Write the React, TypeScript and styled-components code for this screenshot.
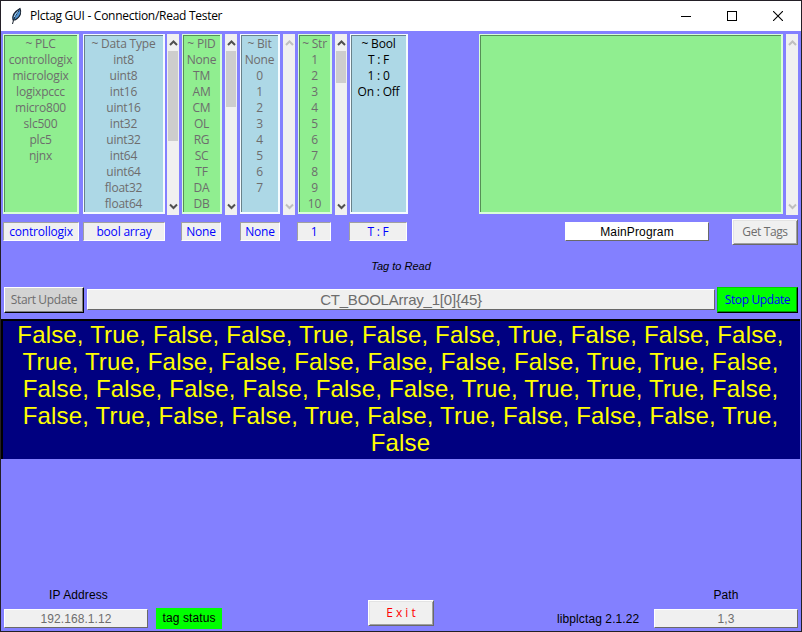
import React from "react";
import styled, { createGlobalStyle } from "styled-components";

const GlobalStyle = createGlobalStyle`
  * { box-sizing: border-box; }
  body { margin: 0; background: #8380ff; overflow: hidden; }
`;

const ui = `"Open Sans", "Noto Sans", sans-serif`;
const arial = `"Liberation Sans", Arial, sans-serif`;

const Window = styled.div`
  width: 802px;
  height: 632px;
  display: flex;
  flex-direction: column;
  border: 1px solid #231f26;
  background: #8380ff;
  font: 12px/16px ${ui};
  white-space: pre;
  cursor: default;
`;

const TitleBar = styled.header`
  height: 30px;
  flex: none;
  display: flex;
  align-items: center;
  background: #fff;
  color: #000;
  padding-left: 9px;
`;

const Title = styled.h1`
  margin: 0 auto 0 7px;
  font: 12px/16px ${ui};
  letter-spacing: -0.28px;
`;

const Caption = styled.span`
  width: 46px;
  height: 30px;
  display: flex;
  align-items: center;
  justify-content: center;
`;

const ListRow = styled.section`
  display: flex;
  height: 184px;
  padding: 3px 0 0 2px;
`;

const ListBox = styled.ul<{ $w: number; $tone: "green" | "blue"; $gap?: number; $active?: boolean }>`
  width: ${(p) => p.$w}px;
  height: 180px;
  flex: none;
  margin: 0 0 0 ${(p) => p.$gap ?? 3}px;
  padding: 1px 0 0;
  list-style: none;
  overflow: hidden;
  text-align: center;
  letter-spacing: -0.2px;
  color: ${(p) => (p.$active ? "#000" : "#6d6d6d")};
  background: ${(p) => (p.$tone === "green" ? "#90ee90" : "#add8e6")};
  border: solid;
  border-width: 1px 2px 2px 1px;
  border-color: ${(p) => (p.$tone === "green" ? "#d8ffd8" : "#f4fcff")};
  box-shadow: inset 1px 1px ${(p) => (p.$tone === "green" ? "#568f56" : "#68828a")};
`;

const Track = styled.div<{ $gap?: number }>`
  width: 12px;
  height: 181px;
  flex: none;
  margin-left: ${(p) => p.$gap ?? 3}px;
  display: flex;
  flex-direction: column;
  background: #f0f0f0;
`;

const Thumb = styled.div<{ $h: number }>`
  height: ${(p) => p.$h}px;
  margin: 0 1px;
  background: #cdcdcd;
`;

const Arrow = styled.svg<{ $last?: boolean }>`
  display: block;
  flex: none;
  width: 12px;
  height: 17px;
  margin-top: ${(p) => (p.$last ? "auto" : "0")};
`;

const Row = styled.section<{ $h: number; $mt?: number; $left?: number }>`
  display: flex;
  flex: none;
  height: ${(p) => p.$h}px;
  margin-top: ${(p) => p.$mt ?? 0}px;
  padding-left: ${(p) => p.$left ?? 2}px;
  align-items: center;
`;

const Value = styled.div<{ $w: number; $gap?: number }>`
  width: ${(p) => p.$w}px;
  height: 19px;
  margin: 0 0 1px ${(p) => p.$gap ?? 0}px;
  border: 1px solid;
  border-color: #a0a0a0 #fff #fff #a0a0a0;
  background: #f0f0f0;
  color: #0000ff;
  line-height: 18px;
  text-align: center;
  letter-spacing: -0.2px;
`;

const Entry = styled.div<{ $w: number; $gap?: number; $h?: number; $live?: boolean; $size?: number; $ls?: number }>`
  width: ${(p) => p.$w}px;
  height: ${(p) => p.$h ?? 19}px;
  margin: 0 0 1px ${(p) => p.$gap ?? 0}px;
  border: 1px solid;
  border-color: #fff #696969 #696969 #fff;
  background: ${(p) => (p.$live ? "#fff" : "#f0f0f0")};
  color: ${(p) => (p.$live ? "#000" : "#6d6d6d")};
  font: ${(p) => p.$size ?? 12}px/${(p) => (p.$h ?? 19) - 1}px ${arial};
  letter-spacing: ${(p) => p.$ls ?? 0.08}px;
  text-align: center;
`;

const Button = styled.button<{ $w: number; $gap?: number; $kind: "plain" | "grey" | "green" | "exit" }>`
  width: ${(p) => p.$w}px;
  height: 26px;
  flex: none;
  margin: 0 0 0 ${(p) => p.$gap ?? 0}px;
  padding: 0;
  border: 1px solid;
  font: 12px/22px ${ui};
  letter-spacing: ${(p) => (p.$kind === "exit" ? "0" : "-0.38px")};
  ${(p) =>
    ({
      plain: `background:#f0f0f0;color:#6d6d6d;border-color:#fff #696969 #696969 #fff;box-shadow:inset 1px 1px #e3e3e3,inset -1px -1px #a0a0a0;`,
      exit: `background:#f0f0f0;color:#f00;border-color:#fff #696969 #696969 #fff;box-shadow:inset 1px 1px #e3e3e3,inset -1px -1px #a0a0a0;`,
      grey: `background:#d3d3d3;color:#6d6d6d;border-color:#fff #000 #000 #fff;box-shadow:inset -1px -1px #7e7e7e;`,
      green: `background:#0f0;color:#00f;border-color:#00d000 #000 #000 #00d000;box-shadow:inset -1px -1px #009900;`,
    })[p.$kind]}
`;

const Hint = styled.div`
  height: 16px;
  margin-top: 13px;
  flex: none;
  text-align: center;
  font: italic 11px/16px ${arial};
  color: #000;
`;

const Results = styled.output`
  display: block;
  flex: none;
  height: 140px;
  margin: 6px 1px 0 0;
  padding-right: 2px;
  border: solid #000;
  border-width: 2px 0 0 2px;
  background: #000080;
  color: #ff0;
  font: 24px/27px ${arial};
  letter-spacing: 0.175px;
  text-align: center;
`;

const Footer = styled.footer`
  margin-top: auto;
  height: 46px;
  flex: none;
  display: flex;
  align-items: flex-start;
  padding-left: 3px;
  font-family: ${arial};
  letter-spacing: 0.1px;
  color: #000;
`;

const Field = styled.label`
  display: flex;
  flex-direction: column;
  align-items: center;
  gap: 6px;
  padding-top: 2px;
`;

const FieldName = styled.span<{ $shift?: number }>`
  padding-left: ${(p) => p.$shift ?? 0}px;
`;

const Status = styled.div`
  width: 66px;
  height: 21px;
  margin: 23px 0 0 8px;
  background: #0f0;
  text-align: center;
  line-height: 21px;
`;

const Slot = styled.div<{ $ml: number; $mt: number; $w: number }>`
  width: ${(p) => p.$w}px;
  margin: ${(p) => p.$mt}px 0 0 ${(p) => p.$ml}px;
`;

function Chevron({ down, dim }: { down?: boolean; dim?: boolean }) {
  return (
    <Arrow $last={down} viewBox="0 0 12 17">
      <path
        d={down ? "M3 6.5 6.5 10 10 6.5" : "M3 11 6.5 7.5 10 11"}
        fill="none"
        stroke={dim ? "#bfbfbf" : "#505050"}
        strokeWidth="2"
      />
    </Arrow>
  );
}

function Scroll({ thumb, gap }: { thumb?: number; gap?: number }) {
  return (
    <Track $gap={gap}>
      <Chevron dim={!thumb} />
      {thumb ? <Thumb $h={thumb} /> : null}
      <Chevron down dim={!thumb} />
    </Track>
  );
}

const items = (values: string) => values.split("|").map((v) => <li key={v}>{v}</li>);

const lines = [
  "False, True, False, False, True, False, False, True, False, False, False,",
  "True, True, False, False, False, False, False, False, True, True, False,",
  "False, False, False, False, False, False, True, True, True, True, False,",
  "False, True, False, False, True, False, True, False, False, False, True,",
  "False",
];

export default function App() {
  return (
    <Window>
      <GlobalStyle />
      <TitleBar>
        <svg width="13" height="18" viewBox="0 0 13 18">
          <path d="M3 13C2 9 4 5 10 1.5C11.5 5 11 10 5 13Z" fill="#4f91d0" stroke="#17202c" strokeWidth="1.1" />
          <path d="M2.5 17C3.5 12 6 7 9 3.5" fill="none" stroke="#17202c" strokeWidth="1" />
          <path d="M8 4.5C6 6 5 8 4.5 10" fill="none" stroke="#b7dcf7" strokeWidth="1" />
        </svg>
        <Title>Plctag GUI - Connection/Read Tester</Title>
        <Caption>
          <svg width="10" height="10"><path d="M0 5.5H10" stroke="#000" /></svg>
        </Caption>
        <Caption>
          <svg width="10" height="10"><rect x=".5" y=".5" width="9" height="9" fill="none" stroke="#000" /></svg>
        </Caption>
        <Caption>
          <svg width="10" height="10"><path d="M0 0 10 10M10 0 0 10" stroke="#000" strokeWidth="1.1" /></svg>
        </Caption>
      </TitleBar>

      <ListRow>
        <ListBox $w={76} $tone="green" $gap={0}>
          {items("~ PLC|controllogix|micrologix|logixpccc|micro800|slc500|plc5|njnx")}
        </ListBox>
        <ListBox $w={82} $tone="blue" $gap={4}>
          {items("~ Data Type|int8|uint8|int16|uint16|int32|uint32|int64|uint64|float32|float64")}
        </ListBox>
        <Scroll thumb={90} gap={2} />
        <ListBox $w={40} $tone="green">{items("~ PID|None|TM|AM|CM|OL|RG|SC|TF|DA|DB")}</ListBox>
        <Scroll thumb={56} />
        <ListBox $w={40} $tone="blue">{items("~ Bit|None|0|1|2|3|4|5|6|7")}</ListBox>
        <Scroll />
        <ListBox $w={34} $tone="green">{items("~ Str|1|2|3|4|5|6|7|8|9|10")}</ListBox>
        <Scroll thumb={32} />
        <ListBox $w={58} $tone="blue" $active>{items("~ Bool|T : F|1 : 0|On : Off")}</ListBox>
        <ListBox $w={304} $tone="green" $gap={71} />
        <Scroll />
      </ListRow>

      <Row $h={26} $mt={4}>
        <Value $w={76}>controllogix</Value>
        <Value $w={82} $gap={4}>bool array</Value>
        <Value $w={40} $gap={16}>None</Value>
        <Value $w={40} $gap={19}>None</Value>
        <Value $w={34} $gap={17}>1</Value>
        <Value $w={58} $gap={18}>T : F</Value>
        <Entry $w={144} $gap={158} $live $ls={0.15}>MainProgram</Entry>
        <Button $w={66} $gap={23} $kind="plain">Get Tags</Button>
      </Row>

      <Hint>Tag to Read</Hint>

      <Row $h={26} $mt={13} $left={3}>
        <Button $w={80} $kind="grey">Start Update</Button>
        <Entry $w={628} $gap={3} $h={21} $size={15} $ls={-0.2}>{"CT_BOOLArray_1[0]{45}"}</Entry>
        <Button $w={81} $gap={2} $kind="green">Stop Update</Button>
      </Row>

      <Results>{lines.join("\n")}</Results>

      <Footer>
        <Field>
          <FieldName $shift={5}>IP Address</FieldName>
          <Entry $w={144}>192.168.1.12</Entry>
        </Field>
        <Status>tag status</Status>
        <Slot $ml={146} $mt={15} $w={66}>
          <Button $w={66} $kind="exit">E x i t</Button>
        </Slot>
        <Slot $ml={123} $mt={26} $w={84}>libplctag 2.1.22</Slot>
        <Slot $ml={13} $mt={0} $w={144}>
          <Field>
            <FieldName>Path</FieldName>
            <Entry $w={144}>1,3</Entry>
          </Field>
        </Slot>
      </Footer>
    </Window>
  );
}
